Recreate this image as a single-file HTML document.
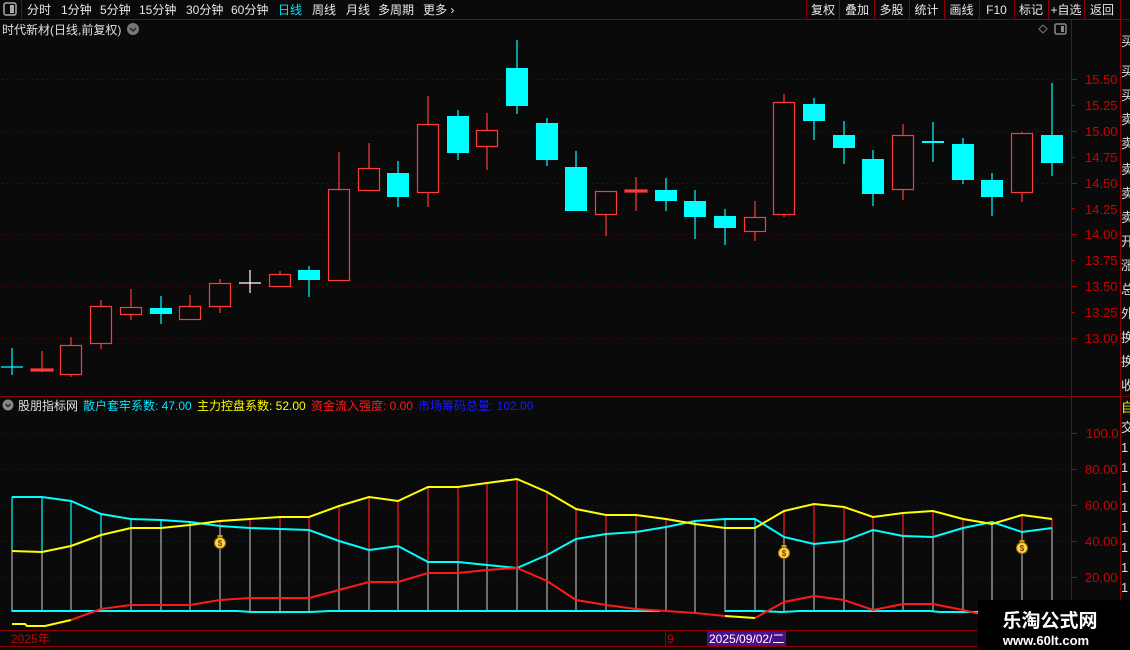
<!DOCTYPE html>
<html><head><meta charset="utf-8"><style>
body{margin:0;background:#0a0a0a;width:1130px;height:650px;overflow:hidden;font-family:"Liberation Sans","Noto Sans CJK SC",sans-serif;}
svg{position:absolute;left:0;top:0}
text{font-family:"Liberation Sans","Noto Sans CJK SC",sans-serif}
</style></head><body>
<svg width="1130" height="650" viewBox="0 0 1130 650">
<rect width="1130" height="650" fill="#0a0a0a"/>
<!-- toolbar -->
<line x1="0" y1="19.5" x2="1130" y2="19.5" stroke="#8b0000"/>
<line x1="21.5" y1="0" x2="21.5" y2="19" stroke="#8b0000"/>
<rect x="4" y="3" width="12" height="12" rx="2" fill="none" stroke="#aaa" stroke-width="1.5"/><rect x="10" y="5" width="4" height="8" fill="#aaa"/>
<g font-size="12" fill="#e8e8e8">
<text x="27" y="14">分时</text><text x="61" y="14">1分钟</text><text x="100" y="14">5分钟</text><text x="139" y="14">15分钟</text><text x="186" y="14">30分钟</text><text x="231" y="14">60分钟</text>
<text x="278" y="14" fill="#00e5ff">日线</text><text x="312" y="14">周线</text><text x="346" y="14">月线</text><text x="378" y="14">多周期</text><text x="423" y="14">更多 ›</text>
<g text-anchor="middle"><text x="823" y="14">复权</text><text x="857" y="14">叠加</text><text x="891.5" y="14">多股</text><text x="926.5" y="14">统计</text><text x="961.5" y="14">画线</text><text x="996.5" y="14">F10</text><text x="1031" y="14">标记</text><text x="1066" y="14">+自选</text><text x="1102" y="14">返回</text></g>
</g>
<g stroke="#8b0000"><line x1="806.5" y1="0" x2="806.5" y2="19"/><line x1="839.5" y1="0" x2="839.5" y2="19"/><line x1="874.5" y1="0" x2="874.5" y2="19"/><line x1="909.5" y1="0" x2="909.5" y2="19"/><line x1="944.5" y1="0" x2="944.5" y2="19"/><line x1="979.5" y1="0" x2="979.5" y2="19"/><line x1="1014.5" y1="0" x2="1014.5" y2="19"/><line x1="1048.5" y1="0" x2="1048.5" y2="19"/><line x1="1084.5" y1="0" x2="1084.5" y2="19"/><line x1="1120.5" y1="0" x2="1120.5" y2="19"/></g>
<!-- title -->
<text x="2" y="34" font-size="12" fill="#e0e0e0">时代新材(日线,前复权)</text>
<circle cx="133" cy="29" r="6" fill="#777"/><path d="M130 28 L133 31 L136 28" stroke="#222" stroke-width="1.5" fill="none"/>
<path d="M1043 25 L1047 29 L1043 33 L1039 29 Z" fill="none" stroke="#777"/>
<rect x="1055" y="24" width="11" height="10" rx="1.5" fill="none" stroke="#888" stroke-width="1.5"/><rect x="1061" y="26" width="3" height="6" fill="#888"/>
<!-- frame -->
<g stroke="#8b0000"><line x1="1071.5" y1="19" x2="1071.5" y2="630"/><line x1="1120.5" y1="19" x2="1120.5" y2="650"/>
<line x1="0" y1="396.5" x2="1130" y2="396.5"/><line x1="0" y1="630.5" x2="1120" y2="630.5"/><line x1="0" y1="646.5" x2="1130" y2="646.5"/></g>
<!-- grid main -->
<g stroke="#7a0000" stroke-dasharray="1 4">
<line x1="2" y1="79.5" x2="1068" y2="79.5"/><line x1="2" y1="131.5" x2="1068" y2="131.5"/><line x1="2" y1="183.5" x2="1068" y2="183.5"/><line x1="2" y1="234.5" x2="1068" y2="234.5"/><line x1="2" y1="286.5" x2="1068" y2="286.5"/><line x1="2" y1="338.5" x2="1068" y2="338.5"/>
<line x1="2" y1="433.5" x2="1068" y2="433.5"/><line x1="2" y1="469.5" x2="1068" y2="469.5"/><line x1="2" y1="505.5" x2="1068" y2="505.5"/><line x1="2" y1="541.5" x2="1068" y2="541.5"/><line x1="2" y1="577.5" x2="1068" y2="577.5"/>
</g>
<g stroke="#aa0000"><line x1="1072" y1="79.5" x2="1077" y2="79.5"/><line x1="1072" y1="105.5" x2="1075" y2="105.5"/><line x1="1072" y1="131.5" x2="1077" y2="131.5"/><line x1="1072" y1="157.5" x2="1075" y2="157.5"/><line x1="1072" y1="183.5" x2="1077" y2="183.5"/><line x1="1072" y1="208.5" x2="1075" y2="208.5"/><line x1="1072" y1="234.5" x2="1077" y2="234.5"/><line x1="1072" y1="260.5" x2="1075" y2="260.5"/><line x1="1072" y1="286.5" x2="1077" y2="286.5"/><line x1="1072" y1="312.5" x2="1075" y2="312.5"/><line x1="1072" y1="338.5" x2="1077" y2="338.5"/>
<line x1="1072" y1="433.5" x2="1077" y2="433.5"/><line x1="1072" y1="469.5" x2="1077" y2="469.5"/><line x1="1072" y1="505.5" x2="1077" y2="505.5"/><line x1="1072" y1="541.5" x2="1077" y2="541.5"/><line x1="1072" y1="577.5" x2="1077" y2="577.5"/></g>
<g font-size="13" fill="#d00000">
<text x="1085" y="84">15.50</text><text x="1085" y="110">15.25</text><text x="1085" y="136">15.00</text><text x="1085" y="162">14.75</text><text x="1085" y="188">14.50</text><text x="1085" y="214">14.25</text><text x="1085" y="239">14.00</text><text x="1085" y="265">13.75</text><text x="1085" y="291">13.50</text><text x="1085" y="317">13.25</text><text x="1085" y="343">13.00</text>
<text x="1086" y="438">100.0</text><text x="1085" y="474">80.00</text><text x="1085" y="510">60.00</text><text x="1085" y="546">40.00</text><text x="1085" y="582">20.00</text>
</g>
<!-- right strip -->
<g font-size="13" fill="#ddd"><text x="1121" y="46">买</text><text x="1121" y="76">买</text><text x="1121" y="100">买</text><text x="1121" y="124">卖</text><text x="1121" y="148">卖</text><text x="1121" y="174">卖</text><text x="1121" y="198">卖</text><text x="1121" y="222">卖</text><text x="1121" y="246">开</text><text x="1121" y="270">涨</text><text x="1121" y="294">总</text><text x="1121" y="318">外</text><text x="1121" y="342">换</text><text x="1121" y="366">换</text><text x="1121" y="390">收</text>
<text x="1121" y="412" fill="#ee0">自</text><text x="1121" y="432">交</text><text x="1121" y="452">1</text><text x="1121" y="472">1</text><text x="1121" y="492">1</text><text x="1121" y="512">1</text><text x="1121" y="532">1</text><text x="1121" y="552">1</text><text x="1121" y="572">1</text><text x="1121" y="592">1</text></g>
<!-- candles -->
<g stroke="#ff3b3b" fill="#0a0a0a" stroke-width="1.2">
<line x1="42" y1="351" x2="42" y2="372"/><rect x="31" y="369" width="22" height="2" fill="#ff3b3b"/>
<line x1="71" y1="337" x2="71" y2="377"/><rect x="60.5" y="345.5" width="21" height="29"/>
<line x1="101" y1="300" x2="101" y2="349"/><rect x="90.5" y="306.5" width="21" height="37"/>
<line x1="131" y1="289" x2="131" y2="320"/><rect x="120.5" y="307.5" width="21" height="7"/>
<line x1="190" y1="295" x2="190" y2="319"/><rect x="179.5" y="306.5" width="21" height="13"/>
<line x1="220" y1="279" x2="220" y2="313"/><rect x="209.5" y="283.5" width="21" height="23"/>
<line x1="280" y1="271" x2="280" y2="287"/><rect x="269.5" y="274.5" width="21" height="12"/>
<line x1="339" y1="152" x2="339" y2="280"/><rect x="328.5" y="189.5" width="21" height="91"/>
<line x1="369" y1="143" x2="369" y2="190"/><rect x="358.5" y="168.5" width="21" height="22"/>
<line x1="428" y1="96" x2="428" y2="207"/><rect x="417.5" y="124.5" width="21" height="68"/>
<line x1="487" y1="113" x2="487" y2="170"/><rect x="476.5" y="130.5" width="21" height="16"/>
<line x1="606" y1="191" x2="606" y2="236"/><rect x="595.5" y="191.5" width="21" height="23"/>
<line x1="636" y1="177" x2="636" y2="211"/><rect x="625" y="190" width="22" height="2" fill="#ff3b3b"/>
<line x1="755" y1="201" x2="755" y2="241"/><rect x="744.5" y="217.5" width="21" height="14"/>
<line x1="784" y1="94" x2="784" y2="217"/><rect x="773.5" y="102.5" width="21" height="112"/>
<line x1="903" y1="124" x2="903" y2="200"/><rect x="892.5" y="135.5" width="21" height="54"/>
<line x1="1022" y1="132" x2="1022" y2="202"/><rect x="1011.5" y="133.5" width="21" height="59"/>
</g>
<g stroke="#00ffff" fill="#00ffff" stroke-width="1.2">
<line x1="12" y1="348" x2="12" y2="375"/><line x1="1" y1="367" x2="23" y2="367"/>
<line x1="161" y1="296" x2="161" y2="324"/><rect x="150" y="308" width="22" height="6" stroke="none"/>
<line x1="309" y1="266" x2="309" y2="297"/><rect x="298" y="270" width="22" height="10" stroke="none"/>
<line x1="398" y1="161" x2="398" y2="207"/><rect x="387" y="173" width="22" height="24" stroke="none"/>
<line x1="458" y1="110" x2="458" y2="160"/><rect x="447" y="116" width="22" height="37" stroke="none"/>
<line x1="517" y1="40" x2="517" y2="114"/><rect x="506" y="68" width="22" height="38" stroke="none"/>
<line x1="547" y1="118" x2="547" y2="166"/><rect x="536" y="123" width="22" height="37" stroke="none"/>
<line x1="576" y1="151" x2="576" y2="211"/><rect x="565" y="167" width="22" height="44" stroke="none"/>
<line x1="666" y1="178" x2="666" y2="211"/><rect x="655" y="190" width="22" height="11" stroke="none"/>
<line x1="695" y1="190" x2="695" y2="239"/><rect x="684" y="201" width="22" height="16" stroke="none"/>
<line x1="725" y1="209" x2="725" y2="245"/><rect x="714" y="216" width="22" height="12" stroke="none"/>
<line x1="814" y1="98" x2="814" y2="140"/><rect x="803" y="104" width="22" height="17" stroke="none"/>
<line x1="844" y1="121" x2="844" y2="164"/><rect x="833" y="135" width="22" height="13" stroke="none"/>
<line x1="873" y1="150" x2="873" y2="206"/><rect x="862" y="159" width="22" height="35" stroke="none"/>
<line x1="933" y1="122" x2="933" y2="162"/><rect x="922" y="141" width="22" height="2" stroke="none"/>
<line x1="963" y1="138" x2="963" y2="184"/><rect x="952" y="144" width="22" height="36" stroke="none"/>
<line x1="992" y1="173" x2="992" y2="216"/><rect x="981" y="180" width="22" height="17" stroke="none"/>
<line x1="1052" y1="83" x2="1052" y2="176"/><rect x="1041" y="135" width="22" height="28" stroke="none"/>
</g>
<g stroke="#fff" stroke-width="1.2"><line x1="250" y1="270" x2="250" y2="293"/><line x1="239" y1="283" x2="261" y2="283"/></g>
<!-- indicator header -->
<circle cx="8" cy="405" r="5.5" fill="#888"/><path d="M5.5 404 L8 406.5 L10.5 404" stroke="#222" stroke-width="1.5" fill="none"/>
<g font-size="12"><text x="18" y="410" fill="#e0e0e0">股朋指标网</text><text x="83" y="410" fill="#00e5ff">散户套牢系数: 47.00</text><text x="197" y="410" fill="#ffff00">主力控盘系数: 52.00</text><text x="311" y="410" fill="#ff1a1a">资金流入强度: 0.00</text><text x="418" y="410" fill="#1a1aff">市场筹码总量: 102.00</text></g>
<!-- verticals -->
<g stroke-width="1.2">
<g stroke="#00ffff"><line x1="12" y1="497" x2="12" y2="551"/><line x1="42" y1="497" x2="42" y2="552"/><line x1="71" y1="501" x2="71" y2="546"/><line x1="101" y1="514" x2="101" y2="535"/><line x1="131" y1="519" x2="131" y2="528"/><line x1="161" y1="520" x2="161" y2="528"/><line x1="190" y1="522" x2="190" y2="525"/></g>
<g stroke="#ff1a1a"><line x1="220" y1="521" x2="220" y2="526"/><line x1="250" y1="519" x2="250" y2="528"/><line x1="280" y1="517" x2="280" y2="529"/><line x1="309" y1="517" x2="309" y2="530"/><line x1="339" y1="506" x2="339" y2="541"/><line x1="369" y1="497" x2="369" y2="550"/><line x1="398" y1="501" x2="398" y2="546"/><line x1="428" y1="487" x2="428" y2="562"/><line x1="458" y1="487" x2="458" y2="562"/><line x1="487" y1="483" x2="487" y2="565"/><line x1="517" y1="479" x2="517" y2="568"/><line x1="547" y1="492" x2="547" y2="555"/><line x1="576" y1="509" x2="576" y2="539"/><line x1="606" y1="515" x2="606" y2="534"/><line x1="636" y1="515" x2="636" y2="532"/><line x1="666" y1="519" x2="666" y2="527"/><line x1="784" y1="511" x2="784" y2="537"/><line x1="814" y1="504" x2="814" y2="544"/><line x1="844" y1="507" x2="844" y2="541"/><line x1="873" y1="517" x2="873" y2="530"/><line x1="903" y1="513" x2="903" y2="536"/><line x1="933" y1="511" x2="933" y2="537"/><line x1="963" y1="519" x2="963" y2="528"/><line x1="1022" y1="515" x2="1022" y2="532"/><line x1="1052" y1="519" x2="1052" y2="528"/></g>
<g stroke="#00ffff"><line x1="695" y1="521" x2="695" y2="524"/><line x1="725" y1="519" x2="725" y2="528"/><line x1="755" y1="519" x2="755" y2="528"/><line x1="992" y1="522" x2="992" y2="524"/></g>
<g stroke="#b0b0b0"><line x1="12" y1="551" x2="12" y2="612"/><line x1="42" y1="552" x2="42" y2="612"/><line x1="71" y1="546" x2="71" y2="612"/><line x1="101" y1="535" x2="101" y2="612"/><line x1="131" y1="528" x2="131" y2="612"/><line x1="161" y1="528" x2="161" y2="612"/><line x1="190" y1="525" x2="190" y2="612"/><line x1="220" y1="526" x2="220" y2="612"/><line x1="250" y1="528" x2="250" y2="612"/><line x1="280" y1="529" x2="280" y2="612"/><line x1="309" y1="530" x2="309" y2="612"/><line x1="339" y1="541" x2="339" y2="612"/><line x1="369" y1="550" x2="369" y2="612"/><line x1="398" y1="546" x2="398" y2="612"/><line x1="428" y1="562" x2="428" y2="612"/><line x1="458" y1="562" x2="458" y2="612"/><line x1="487" y1="565" x2="487" y2="612"/><line x1="517" y1="568" x2="517" y2="612"/><line x1="547" y1="555" x2="547" y2="612"/><line x1="576" y1="539" x2="576" y2="612"/><line x1="606" y1="534" x2="606" y2="612"/><line x1="636" y1="532" x2="636" y2="612"/><line x1="666" y1="527" x2="666" y2="612"/><line x1="695" y1="524" x2="695" y2="612"/><line x1="725" y1="528" x2="725" y2="612"/><line x1="755" y1="528" x2="755" y2="612"/><line x1="784" y1="537" x2="784" y2="612"/><line x1="814" y1="544" x2="814" y2="612"/><line x1="844" y1="541" x2="844" y2="612"/><line x1="873" y1="530" x2="873" y2="612"/><line x1="903" y1="536" x2="903" y2="612"/><line x1="933" y1="537" x2="933" y2="612"/><line x1="963" y1="528" x2="963" y2="612"/><line x1="992" y1="524" x2="992" y2="612"/><line x1="1022" y1="532" x2="1022" y2="612"/><line x1="1052" y1="528" x2="1052" y2="612"/></g>
</g>
<!-- indicator lines -->
<g fill="none" stroke-width="2">
<polyline stroke="#00ffff" points="12,497 42,497 71,501 101,514 131,519 161,520 190,522 220,526 250,528 280,529 309,530 339,541 369,550 398,546 428,562 458,562 487,565 517,568 547,555 576,539 606,534 636,532 666,527 695,521 725,519 755,519 784,537 814,544 844,541 873,530 903,536 933,537 963,528 992,522 1022,532 1052,528"/>
<polyline stroke="#ffff00" points="12,551 42,552 71,546 101,535 131,528 161,528 190,525 220,521 250,519 280,517 309,517 339,506 369,497 398,501 428,487 458,487 487,483 517,479 547,492 576,509 606,515 636,515 666,519 695,524 725,528 755,528 784,511 814,504 844,507 873,517 903,513 933,511 963,519 992,524 1022,515 1052,519"/>
<polyline stroke="#00ffff" points="12,611 237,611 252,612 310,612 330,611 660,611"/>
<polyline stroke="#00ffff" points="725,611 760,611 782,612 800,611 930,611 940,612 1052,612"/>
<polyline stroke="#ffff00" points="12,624 25,624 27,626 45,626 71,620"/>
<polyline stroke="#ff1a1a" points="71,620 101,609 131,605 161,605 190,605 220,600 250,598 309,598 339,590 369,582 398,582 428,573 458,573 487,570 517,568 547,581 576,600 606,605 636,609 666,611 695,613 725,616"/>
<polyline stroke="#ffff00" points="725,616 740,617 755,618"/>
<polyline stroke="#ff1a1a" points="755,618 784,602 814,596 844,600 873,610 903,604 933,604 963,610 992,617 1022,624"/>
</g>
<!-- money bags -->
<g font-size="8" font-weight="bold" text-anchor="middle">
<g transform="translate(220,543)"><rect x="-2.5" y="-8" width="5" height="3" fill="#c8a000"/><circle cx="0" cy="0" r="5.5" fill="#ffd84a" stroke="#a07000"/><text x="0" y="3" fill="#7a3a00">$</text></g>
<g transform="translate(784,553)"><rect x="-2.5" y="-8" width="5" height="3" fill="#c8a000"/><circle cx="0" cy="0" r="5.5" fill="#ffd84a" stroke="#a07000"/><text x="0" y="3" fill="#7a3a00">$</text></g>
<g transform="translate(1022,548)"><rect x="-2.5" y="-8" width="5" height="3" fill="#c8a000"/><circle cx="0" cy="0" r="5.5" fill="#ffd84a" stroke="#a07000"/><text x="0" y="3" fill="#7a3a00">$</text></g>
</g>
<!-- date bar -->
<text x="11" y="643" font-size="12" fill="#cc0000">2025年</text>
<line x1="665.5" y1="631" x2="665.5" y2="646" stroke="#8b0000"/>
<text x="667" y="643" font-size="12" fill="#cc0000">9</text>
<rect x="707" y="631" width="79" height="15" fill="#4b0f8a"/>
<text x="709" y="643" font-size="12" fill="#fff">2025/09/02/二</text>
<!-- watermark -->
<rect x="978" y="600" width="152" height="50" fill="#000"/>
<text x="1050" y="627" font-size="19" font-weight="bold" fill="#fff" text-anchor="middle" font-family="Noto Serif CJK SC, serif">乐淘公式网</text>
<text x="1046" y="645" font-size="13" font-weight="bold" fill="#fff" text-anchor="middle" font-family="Liberation Serif, serif">www.60lt.com</text>
</svg>
</body></html>
